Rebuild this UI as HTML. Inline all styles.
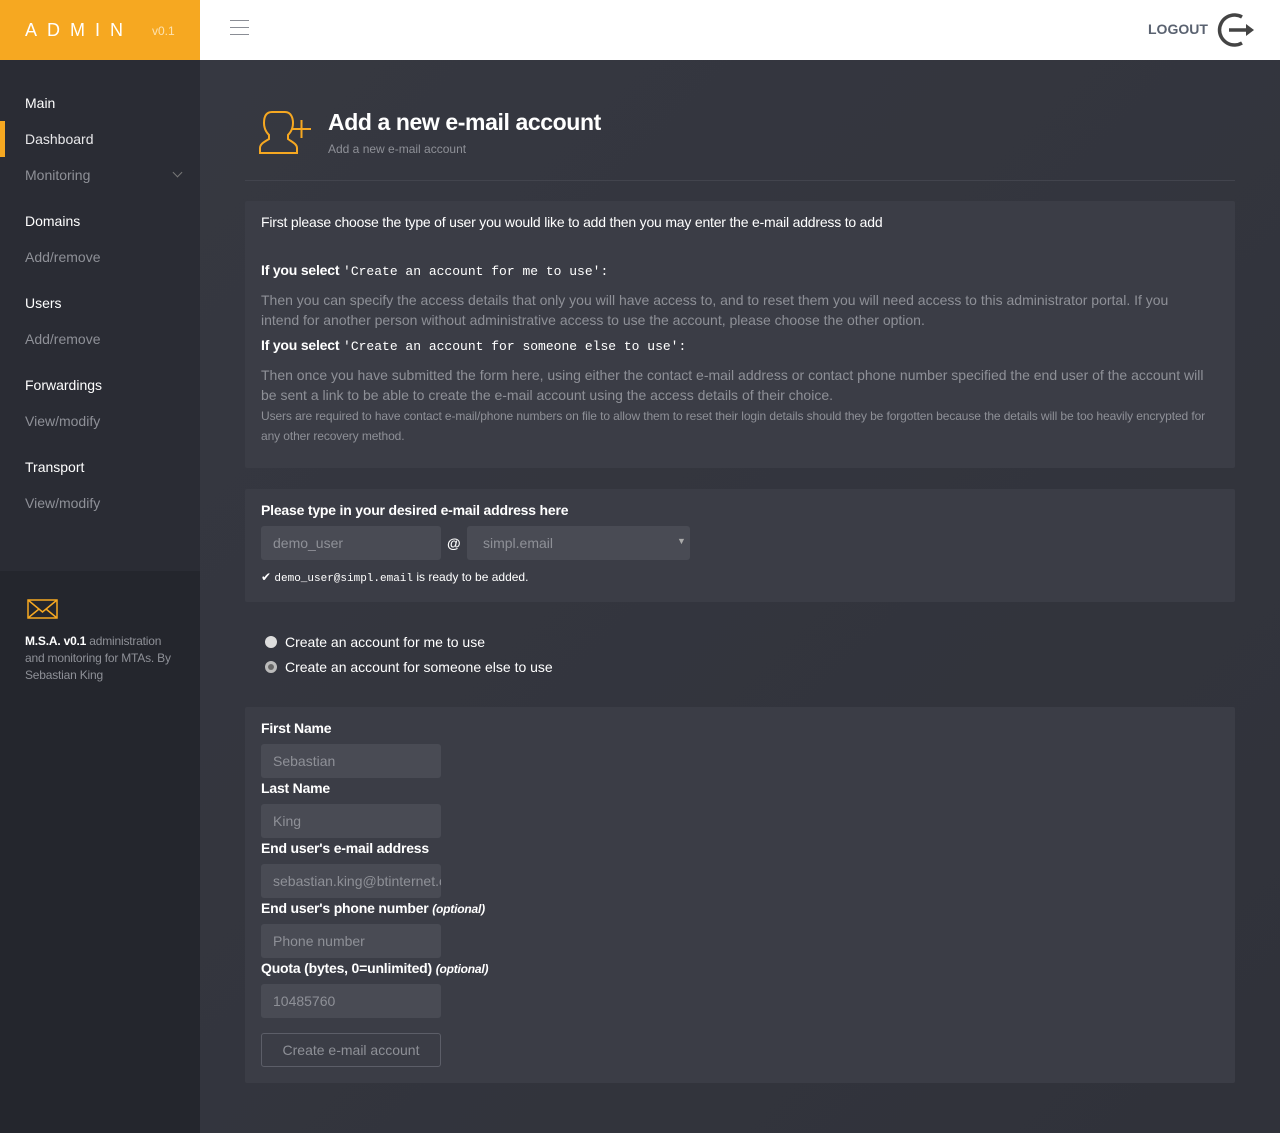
<!DOCTYPE html>
<html><head><meta charset="utf-8"><style>
*{box-sizing:border-box;margin:0;padding:0}
body{width:1280px;height:1133px;background:#33353e;font-family:"Liberation Sans",sans-serif;position:relative;overflow:hidden;color:#fff}
.a{position:absolute;white-space:nowrap}
.top{position:absolute;left:0;top:0;width:1280px;height:60px;background:#fff}
.logo{position:absolute;left:0;top:0;width:200px;height:60px;background:#f6a821}
.side{position:absolute;left:0;top:60px;width:200px;height:1073px;background:#2a2c34}
.main{position:absolute;left:200px;top:60px;width:1080px;height:1073px;background:linear-gradient(135deg,#363841,#30323a)}
.nh{font-size:14px;color:#fff;left:25px}
.ni{font-size:14px;color:#8e9097;left:25px}
.panel{position:absolute;left:245px;width:990px;background:#3b3d46;border-radius:2px}
.inp{position:absolute;background:#494b54;border-radius:3px;font-size:14px;color:#8e9097;padding:0 12px;line-height:34px;height:34px;width:180px;overflow:hidden;white-space:nowrap}
.lbl{font-size:14px;font-weight:bold;color:#fff;left:261px;letter-spacing:-0.2px}
.grey{font-size:14px;color:#8e9097;left:261px}
.mono{font-family:"Liberation Mono",monospace;font-weight:normal;font-size:13px;letter-spacing:0}
</style></head><body>
<div class="top"></div>
<div class="logo"></div>
<div class="a" style="left:25px;top:20px;font-size:18px;letter-spacing:10px;color:#fff">ADMIN</div>
<div class="a" style="left:152px;top:24px;font-size:12px;color:#fde2b0">v0.1</div>
<div class="a" style="left:230px;top:20px;width:19px;height:1px;background:#8a8d95;box-shadow:0 7px 0 #8a8d95,0 14px 0 #8a8d95"></div>
<div class="a" style="left:1148px;top:21px;font-size:14px;color:#5a6270;font-weight:bold">LOGOUT</div>
<svg class="a" style="left:1214px;top:10px" width="42" height="40" viewBox="0 0 42 40"><path d="M28 7 A15 15 0 1 0 28 33" fill="none" stroke="#444" stroke-width="3.5"/><path d="M15 20H33" stroke="#444" stroke-width="3.5"/><path d="M32 14L40 20L32 26Z" fill="#444"/></svg>
<div class="side"></div>
<div class="main"></div>
<div class="a nh" style="top:95px">Main</div>
<div class="a" style="left:0;top:121px;width:5px;height:36px;background:#f6a821"></div>
<div class="a" style="left:25px;top:131px;font-size:14px;color:#e8e8ea">Dashboard</div>
<div class="a ni" style="top:167px">Monitoring</div>
<div class="a" style="left:174px;top:169px;width:7px;height:7px;border-right:1px solid #777;border-bottom:1px solid #777;transform:rotate(45deg)"></div>
<div class="a nh" style="top:213px">Domains</div>
<div class="a ni" style="top:249px">Add/remove</div>
<div class="a nh" style="top:295px">Users</div>
<div class="a ni" style="top:331px">Add/remove</div>
<div class="a nh" style="top:377px">Forwardings</div>
<div class="a ni" style="top:413px">View/modify</div>
<div class="a nh" style="top:459px">Transport</div>
<div class="a ni" style="top:495px">View/modify</div>
<div class="a" style="left:0;top:571px;width:200px;height:562px;background:#24262d"></div>
<svg class="a" style="left:27px;top:599px" width="31" height="20"><rect x="1" y="1" width="29" height="18" fill="none" stroke="#f6a821" stroke-width="1.5"/><path d="M1 1L15.5 13L30 1M1 19L12 10M30 19L19 10" fill="none" stroke="#f6a821" stroke-width="1.5"/></svg>
<div class="a" style="left:25px;top:633px;font-size:12px;line-height:17px;color:#8e9097;white-space:normal;width:148px;letter-spacing:-0.2px"><b style="color:#fff">M.S.A. v0.1</b> administration and monitoring for MTAs. By Sebastian King</div>
<svg class="a" style="left:258px;top:109px" width="55" height="46" viewBox="0 0 55 46"><path d="M14 3 C7 3 6 9 6 14 C6 19 8 23 11 26 L11 30 C6 33 2 35 2 39 L2 44 L39 44 L39 39 C39 35 34 33 30 30 L30 26 C33 23 35 19 35 14 C35 9 33 3 27 3Z" fill="none" stroke="#f6a821" stroke-width="2"/><path d="M34 20H53M43.5 11V29" stroke="#f6a821" stroke-width="2"/></svg>
<div class="a" style="left:328px;top:109px;font-size:23px;font-weight:bold;color:#fff;letter-spacing:-0.4px">Add a new e-mail account</div>
<div class="a" style="left:328px;top:142px;font-size:12px;color:#8e9097">Add a new e-mail account</div>
<div class="a" style="left:245px;top:180px;width:990px;height:1px;background:#42444d"></div>
<div class="panel" style="top:201px;height:267px"></div>
<div class="a lbl" style="top:214px;font-weight:normal">First please choose the type of user you would like to add then you may enter the e-mail address to add</div>
<div class="a lbl" style="top:262px">If you select <span class="mono">'Create an account for me to use':</span></div>
<div class="a grey" style="top:290px;line-height:20px;white-space:normal;width:935px">Then you can specify the access details that only you will have access to, and to reset them you will need access to this administrator portal. If you intend for another person without administrative access to use the account, please choose the other option.</div>
<div class="a lbl" style="top:337px">If you select <span class="mono">'Create an account for someone else to use':</span></div>
<div class="a grey" style="top:365px;line-height:20px;white-space:normal;width:958px">Then once you have submitted the form here, using either the contact e-mail address or contact phone number specified the end user of the account will be sent a link to be able to create the e-mail account using the access details of their choice.</div>
<div class="a grey" style="top:406px;font-size:12px;line-height:20px;white-space:normal;width:958px;letter-spacing:-0.1px">Users are required to have contact e-mail/phone numbers on file to allow them to reset their login details should they be forgotten because the details will be too heavily encrypted for any other recovery method.</div>
<div class="panel" style="top:489px;height:113px"></div>
<div class="a lbl" style="top:502px">Please type in your desired e-mail address here</div>
<div class="inp" style="left:261px;top:526px">demo_user</div>
<div class="a" style="left:447px;top:535px;font-size:14px;font-weight:bold">@</div>
<div class="inp" style="left:467px;top:526px;width:223px;padding-left:16px">simpl.email</div>
<div class="a" style="left:677px;top:536px;font-size:9px;color:#aaa">▼</div>
<div class="a" style="left:261px;top:570px;font-size:12px;color:#fff">✔ <span class="mono" style="font-size:11px">demo_user@simpl.email</span> is ready to be added.</div>
<div class="a" style="left:265px;top:636px;width:12px;height:12px;border-radius:50%;background:#ddd"></div>
<div class="a" style="left:285px;top:634px;font-size:14px;color:#fff">Create an account for me to use</div>
<div class="a" style="left:265px;top:661px;width:12px;height:12px;border-radius:50%;background:#ddd;border:3px solid #bbb"></div>
<div class="a" style="left:268px;top:664px;width:6px;height:6px;border-radius:50%;background:#666"></div>
<div class="a" style="left:285px;top:659px;font-size:14px;color:#fff">Create an account for someone else to use</div>
<div class="panel" style="top:707px;height:376px"></div>
<div class="a lbl" style="top:720px">First Name</div>
<div class="inp" style="left:261px;top:744px">Sebastian</div>
<div class="a lbl" style="top:780px">Last Name</div>
<div class="inp" style="left:261px;top:804px">King</div>
<div class="a lbl" style="top:840px">End user's e-mail address</div>
<div class="inp" style="left:261px;top:864px">sebastian.king@btinternet.com</div>
<div class="a lbl" style="top:900px">End user's phone number <i style="font-size:12px">(optional)</i></div>
<div class="inp" style="left:261px;top:924px">Phone number</div>
<div class="a lbl" style="top:960px">Quota (bytes, 0=unlimited) <i style="font-size:12px">(optional)</i></div>
<div class="inp" style="left:261px;top:984px">10485760</div>
<div class="a" style="left:261px;top:1033px;width:180px;height:34px;border:1px solid #5c5e68;border-radius:3px;font-size:14px;color:#8e9097;text-align:center;line-height:32px">Create e-mail account</div>
</body></html>
